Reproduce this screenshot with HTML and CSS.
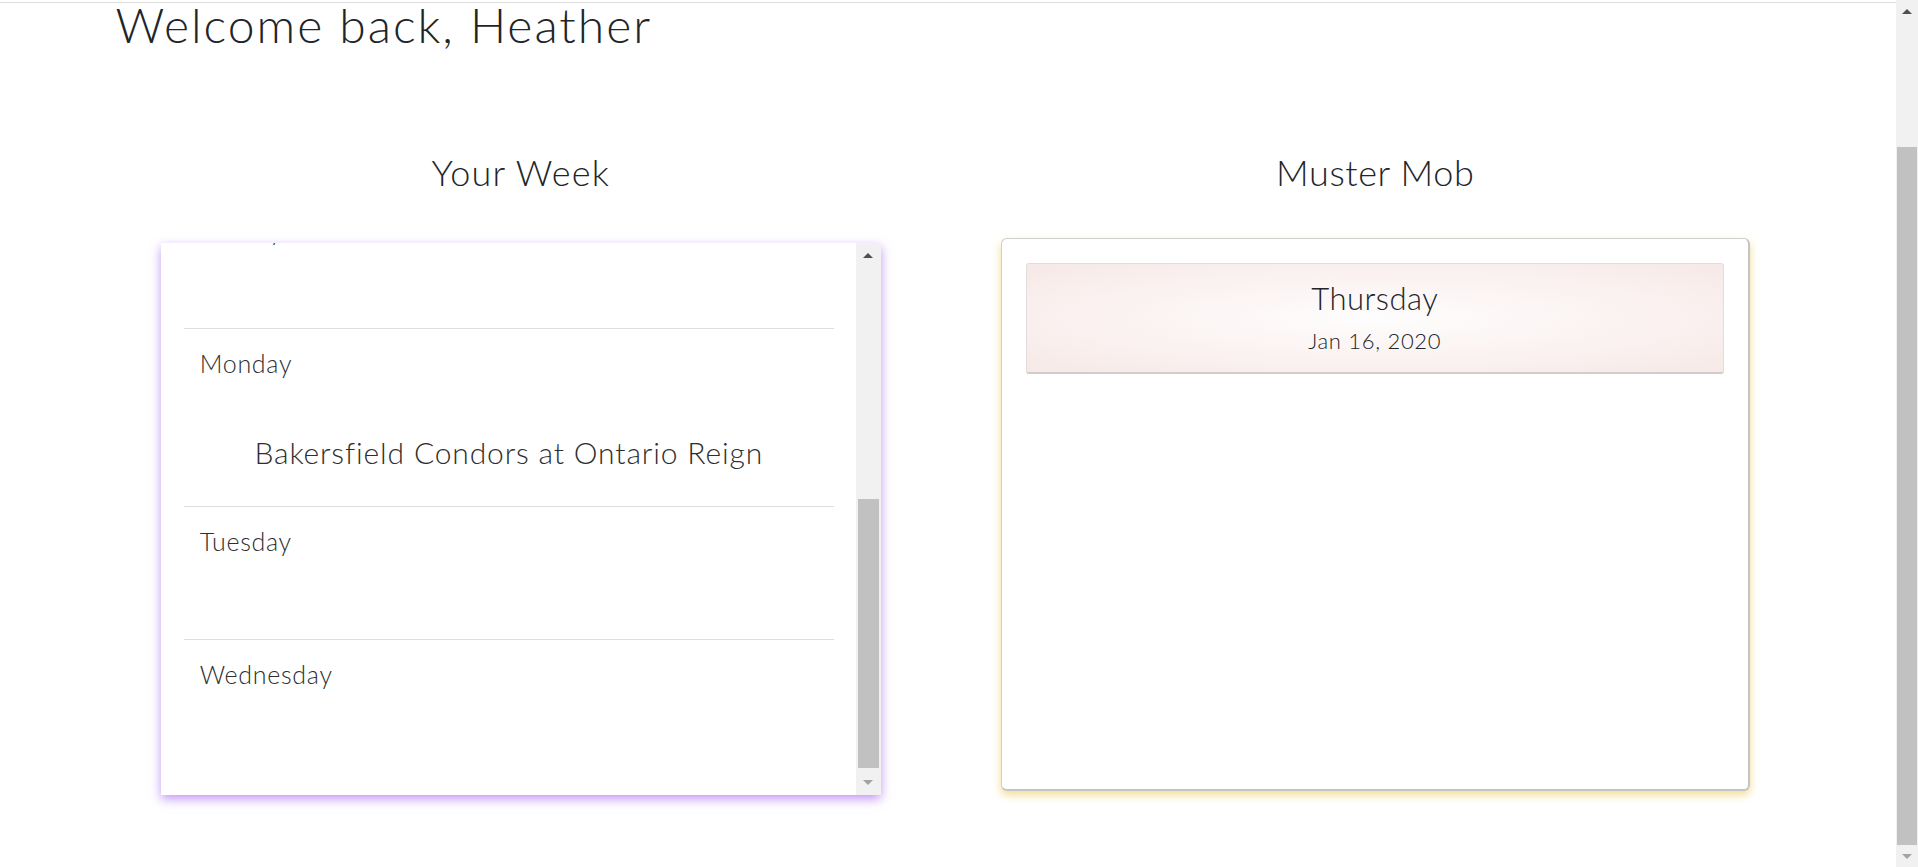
FILE: index.html
```html
<!DOCTYPE html>
<html lang="en">
<head>
<meta charset="utf-8">
<title>Dashboard</title>
<link rel="stylesheet" href="styles.css">
</head>
<body>
<div class="viewport">
  <div class="page-main">
    <div class="topbar"></div>
    <main class="page">
      <h1 class="welcome">Welcome back, Heather</h1>
      <div class="panels">
        <section class="panel">
          <h2 class="panel-title">Your Week</h2>
          <div class="week-box">
            <ul class="week-list">
              <li class="day"><div class="day-name">Thursday</div><div class="events"></div></li>
              <li class="day"><div class="day-name">Friday</div><div class="events"></div></li>
              <li class="day"><div class="day-name">Saturday</div><div class="events"></div></li>
              <li class="day"><div class="day-name">Sunday</div><div class="events"></div></li>
              <li class="day"><div class="day-name">Monday</div><div class="events"><div class="event">Bakersfield Condors at Ontario Reign</div></div></li>
              <li class="day"><div class="day-name">Tuesday</div><div class="events"></div></li>
              <li class="day"><div class="day-name">Wednesday</div><div class="events"></div></li>
            </ul>
            <div class="scrollbar scrollbar-inner">
              <div class="sb-btn"><span class="arrow-up"></span></div>
              <div class="sb-track"><div class="sb-thumb"></div></div>
              <div class="sb-btn"><span class="arrow-down"></span></div>
            </div>
          </div>
        </section>
        <section class="panel">
          <h2 class="panel-title title-mob">Muster Mob</h2>
          <div class="mob-box">
            <div class="mob-card">
              <div class="mob-day">Thursday</div>
              <div class="mob-date">Jan 16, 2020</div>
            </div>
          </div>
        </section>
      </div>
    </main>
  </div>
  <div class="scrollbar scrollbar-page">
    <div class="sb-btn"><span class="arrow-up"></span></div>
    <div class="sb-track"><div class="sb-thumb"></div></div>
    <div class="sb-btn"><span class="arrow-down"></span></div>
  </div>
</div>
</body>
</html>
```
FILE: styles.css
```css
body {
  margin: 0;
  font-family: "Lato", "Liberation Sans", sans-serif;
  font-weight: 300;
  color: #212529;
  background: #fff;
}
.viewport {
  display: flex;
  height: 867px;
  overflow: hidden;
}
.page-main {
  flex: 1;
  min-width: 0;
  overflow: hidden;
}

/* fake scrollbars */
.scrollbar {
  display: flex;
  flex-direction: column;
  flex-shrink: 0;
  background: #f1f1f1;
}
.scrollbar-page {
  width: 22px;
}
.scrollbar-inner {
  width: 25px;
}
.sb-btn {
  display: flex;
  align-items: center;
  justify-content: center;
  flex-shrink: 0;
}
.scrollbar-page .sb-btn {
  height: 22px;
}
.scrollbar-inner .sb-btn {
  height: 25px;
}
.sb-track {
  flex: 1;
  display: flex;
  flex-direction: column;
  justify-content: flex-end;
}
.sb-thumb {
  background: #c1c1c1;
}
.scrollbar-page .sb-thumb {
  height: 698px;
  margin: 0 1px;
}
.scrollbar-inner .sb-thumb {
  height: 269px;
  margin: 0 2px 2px;
}
.arrow-up {
  width: 0;
  height: 0;
  border-left: 5px solid transparent;
  border-right: 5px solid transparent;
  border-bottom: 5px solid #505050;
}
.arrow-down {
  width: 0;
  height: 0;
  border-left: 5px solid transparent;
  border-right: 5px solid transparent;
  border-top: 5px solid #a3a3a3;
}

.topbar {
  height: 2px;
  border-bottom: 1px solid #dedede;
}
.page {
  width: 1709px;
  margin: 0 auto;
}
.welcome {
  margin: 0;
  padding-left: 22px;
  font-size: 48px;
  line-height: 44px;
  font-weight: 300;
  letter-spacing: 2px;
}
.panels {
  display: grid;
  grid-template-columns: 1fr 1fr;
  align-items: start;
  margin-top: 104px;
}
.panel {
  display: flex;
  flex-direction: column;
  align-items: center;
}
.panel-title {
  margin: 0;
  font-size: 36px;
  line-height: 42px;
  font-weight: 300;
  letter-spacing: 1.2px;
}
.title-mob {
  letter-spacing: 0.6px;
}
.week-box {
  display: flex;
  width: 720px;
  height: 552px;
  margin-top: 50px;
  background: #fff;
  box-shadow: 0 4px 10px rgba(170, 110, 245, 0.72);
}
.week-list {
  flex: 1;
  display: flex;
  flex-direction: column;
  justify-content: flex-end;
  overflow: hidden;
  list-style: none;
  margin: 0;
  padding: 0 22px 23px 23px;
}
.day {
  flex-shrink: 0;
  border-top: 1px solid #dedede;
  padding: 17px 0 0 16px;
}
.day-name {
  font-size: 25px;
  line-height: 34px;
  letter-spacing: 0.7px;
  color: #2e2e2e;
}
.events {
  min-height: 81px;
}
.event {
  text-align: center;
  font-size: 30px;
  line-height: 34px;
  letter-spacing: 0.85px;
  color: #2e2e2e;
  padding: 55px 16px 37px 0;
}
.mob-box {
  width: 749px;
  height: 553px;
  margin-top: 45px;
  box-sizing: border-box;
  border: 1px solid #cfcfcf;
  border-right: 2px solid #c4c4c4;
  border-bottom: 2px solid #c4c4c4;
  border-radius: 6px;
  padding: 24px;
  background: #fff;
  box-shadow: 0 4px 8px rgba(240, 215, 130, 0.85);
}
.mob-card {
  height: 111px;
  box-sizing: border-box;
  border: 1px solid #e2dcdc;
  border-bottom: 2px solid #d3cccc;
  border-radius: 3px;
  background: radial-gradient(ellipse at center, #fefdfd 0%, #faf1f0 60%, #f6e9e7 100%);
  text-align: center;
}
.mob-day {
  font-size: 31px;
  line-height: 36px;
  letter-spacing: 0.5px;
  padding-top: 16px;
}
.mob-date {
  font-size: 22px;
  line-height: 30px;
  letter-spacing: 0.7px;
  margin-top: 10px;
}
```
